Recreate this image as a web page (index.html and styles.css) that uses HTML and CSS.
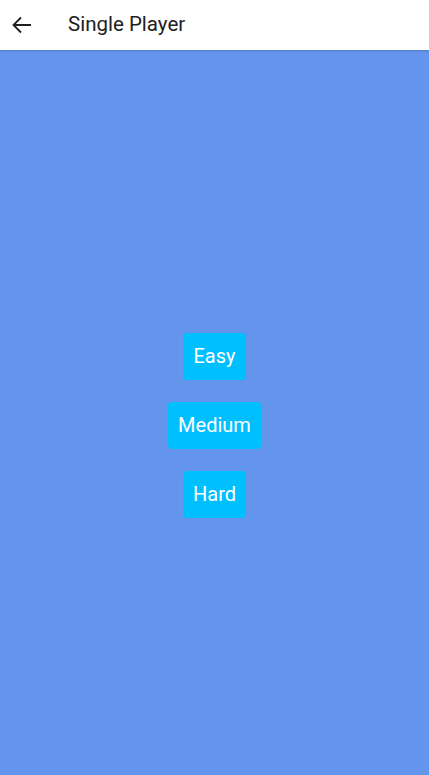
FILE: index.html
```html
<!DOCTYPE html>
<html>
<head>
<meta charset="utf-8">
<link rel="stylesheet" href="styles.css">
</head>
<body>
<header class="appbar">
  <button class="back" aria-label="Back">
    <svg width="20" height="18" viewBox="0 0 20 18"><path d="M19 9H2M9 1.5L1.5 9L9 16.5" fill="none" stroke="#1f1f1f" stroke-width="1.8"/></svg>
  </button>
  <h1 class="title">Single Player</h1>
</header>
<main class="content">
  <button class="level">Easy</button>
  <button class="level">Medium</button>
  <button class="level">Hard</button>
</main>
</body>
</html>
```
FILE: styles.css
```css
html, body {
  margin: 0;
  padding: 0;
  height: 100%;
}
body {
  font-family: Roboto, "Noto Sans", sans-serif;
  background: #6495ed;
  display: flex;
  flex-direction: column;
}
.appbar {
  height: 50px;
  background: #fff;
  display: flex;
  align-items: center;
  box-shadow: 0 1px 2px rgba(0,0,0,0.2);
  position: relative;
  z-index: 1;
  flex-shrink: 0;
}
.back {
  border: 0;
  background: none;
  padding: 0;
  margin-left: 12px;
  width: 20px;
  height: 18px;
  display: flex;
}
.title {
  margin: -2px 0 0 36px;
  font-size: 20.5px;
  font-weight: 400;
  color: #212121;
}
.content {
  flex: 1;
  display: flex;
  flex-direction: column;
  align-items: center;
  justify-content: center;
  gap: 22px;
  padding-top: 25px;
}
.level {
  border: 0;
  background: #00bfff;
  color: #fff;
  font-family: Roboto, "Noto Sans", sans-serif;
  font-size: 20px;
  height: 47px;
  padding: 0 10px;
  border-radius: 4px;
}
```
